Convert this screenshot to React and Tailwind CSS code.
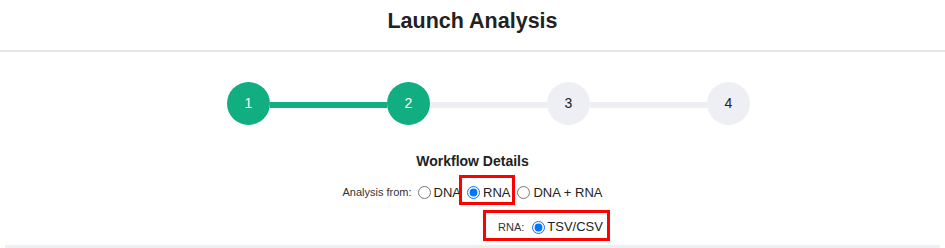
import React from "react";

const steps = [
  { n: 1, done: true },
  { n: 2, done: true },
  { n: 3, done: false },
  { n: 4, done: false },
];

const Stepper = () => (
  <div className="flex justify-center pl-[32px] mt-[30px]">
    <div className="flex items-center">
      {steps.map((s, i) => (
        <React.Fragment key={s.n}>
          {i > 0 && (
            <div
              className={`w-[117px] h-[6px] mt-[3px] ${
                s.done ? "bg-[#10ae80]" : "bg-[#eeeff4]"
              }`}
            />
          )}
          <div
            className={`w-[43px] h-[43px] rounded-full flex items-center justify-center text-[14px] ${
              s.done ? "bg-[#10ae80] text-white" : "bg-[#eeeff4] text-[#222]"
            }`}
          >
            {s.n}
          </div>
        </React.Fragment>
      ))}
    </div>
  </div>
);

const App = () => {
  return (
    <div className="w-[945px] h-[248px] overflow-hidden bg-white font-['Liberation_Sans',Arial,sans-serif] text-[#222]">
      <div className="h-[52px] border-b-2 border-[#e5e5e5] pt-[8px]">
        <h1 className="text-center text-[21.5px] leading-[26px] font-bold text-[#222]">
          Launch Analysis
        </h1>
      </div>

      <Stepper />

      <div className="mt-[26px] text-center text-[14px] leading-[20px] font-bold">
        Workflow Details
      </div>

      {/* source selection */}
      <div className="mt-[4px] flex justify-center">
        <div className="flex items-center h-[30px]">
          <span className="mt-[5px] text-[11px] text-[#333]">Analysis from:</span>
          <input type="radio" name="src" className="mt-[4px] ml-[6px] mr-[3px]" />
          <span className="mt-[6px] text-[13px]">DNA</span>
          <div className="-ml-[2px] h-[30px] border-[3px] border-[#f00] flex items-center pt-[5px] pr-[2px]">
            <input type="radio" name="src" defaultChecked className="ml-[5px] mr-[3px]" />
            <span className="text-[13px] mt-[1px]">RNA</span>
          </div>
          <input type="radio" name="src" className="mt-[4px] ml-[2px] mr-[3px]" />
          <span className="mt-[6px] text-[13px]">DNA + RNA</span>
        </div>
      </div>

      <div className="mt-[5px] flex justify-center pl-[148px]">
        <div className="h-[31px] border-[3px] border-[#f00] flex items-center pt-[3px] pl-[12px] pr-[4px]">
          <span className="text-[11px] text-[#333]">RNA:</span>
          <input type="radio" name="fmt" defaultChecked className="ml-[8px] mr-[2px]" />
          <span className="text-[13px]">TSV/CSV</span>
        </div>
      </div>

      <div className="mt-[4px] mx-[5px] h-[10px] bg-[#eeeff4]" />
    </div>
  );
};

export default App;
